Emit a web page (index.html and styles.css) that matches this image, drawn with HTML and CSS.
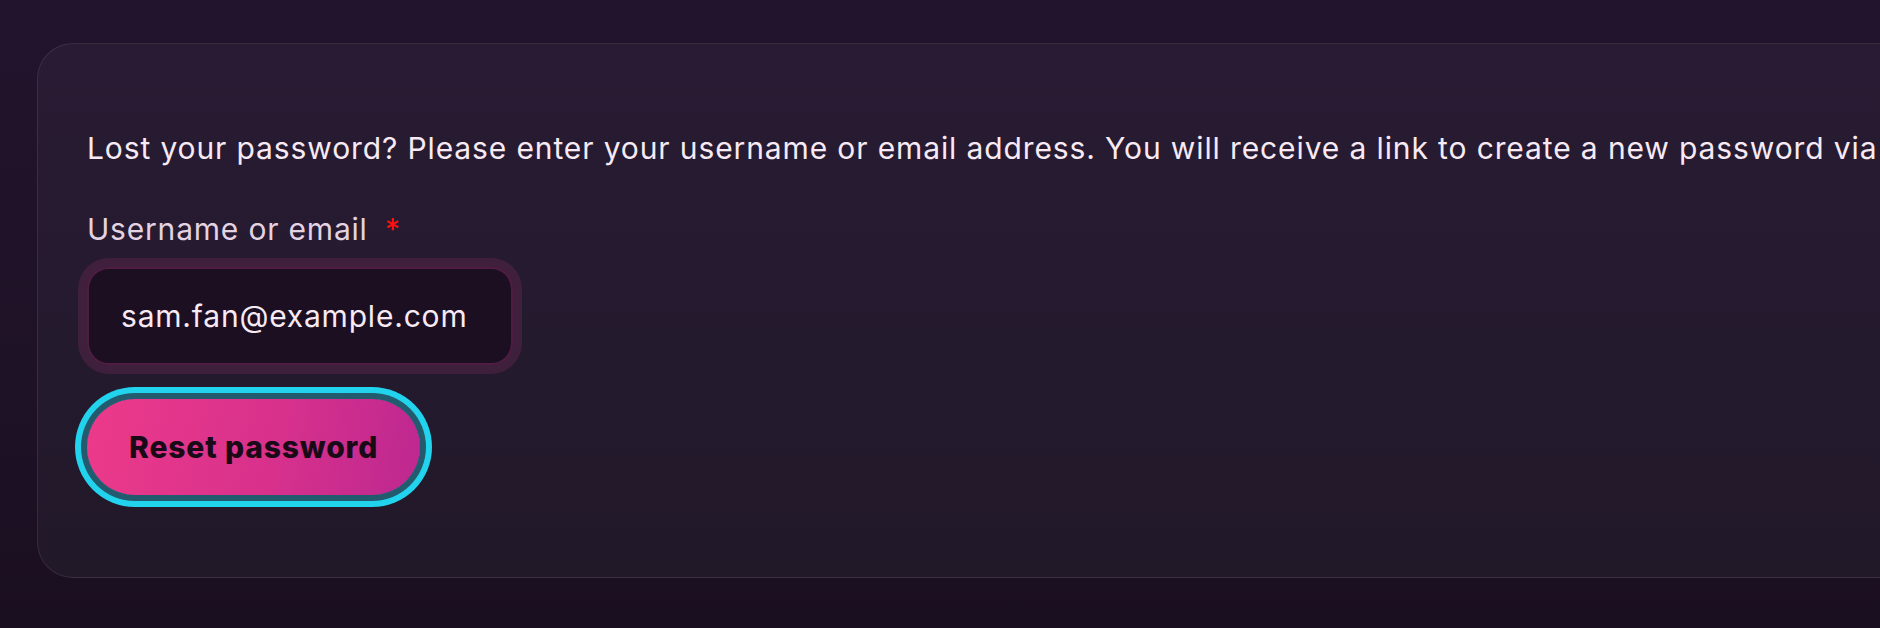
FILE: index.html
```html
<!DOCTYPE html>
<html lang="en">
<head>
<meta charset="utf-8">
<title>Lost password</title>
<link rel="stylesheet" href="styles.css">
</head>
<body>
<main class="page">
  <section class="card">
    <form class="reset-form">
      <p class="intro">Lost your password? Please enter your username or email address. You will receive a link to create a new password via email.</p>
      <label class="field-label" for="user_login">Username or email <span class="required">*</span></label>
      <input class="text-input" id="user_login" type="text" value="sam.fan@example.com">
      <button class="btn-primary" type="button">Reset password</button>
    </form>
  </section>
</main>
</body>
</html>
```

FILE: styles.css
```css
html {
  overflow: hidden;
}

body {
  margin: 0;
  min-height: 628px;
  background: linear-gradient(to bottom, #21142c 0%, #1e1227 60%, #1a0f20 100%);
  font-family: Inter, "Noto Sans", "Liberation Sans", sans-serif;
  color: #f6e9f3;
}

.page {
  padding: 43px 0 0 37px;
}

.card {
  width: 2300px;
  box-sizing: border-box;
  border: 1px solid rgba(255, 255, 255, 0.09);
  border-radius: 36px;
  background: linear-gradient(to bottom, #281b33 0%, #241a2e 60%, #211828 100%);
  padding: 86px 49px 82px 49px;
}

.reset-form {
  display: flex;
  flex-direction: column;
  align-items: flex-start;
}

.intro {
  margin: 0;
  font-size: 30px;
  line-height: 36px;
  letter-spacing: 0.88px;
  white-space: nowrap;
  color: #f7eaf4;
}

.field-label {
  margin-top: 46px;
  font-size: 30px;
  line-height: 34px;
  letter-spacing: 0.8px;
  color: #e4d3e2;
}

.required {
  color: #ff1010;
  margin-left: 8px;
}

.text-input {
  margin-top: 21px;
  width: 426px;
  height: 98px;
  box-sizing: border-box;
  border: 2px solid #4f1d42;
  border-radius: 22px;
  background: #1c0f22;
  color: #f7eaf4;
  font-family: Inter, "Noto Sans", "Liberation Sans", sans-serif;
  font-size: 30px;
  letter-spacing: 0.8px;
  padding: 0 0 0 32px;
  box-shadow: 0 0 0 9px rgba(236, 72, 153, 0.13);
  outline: none;
}

.btn-primary {
  margin-top: 34px;
  height: 96px;
  padding: 0 42px;
  border: none;
  border-radius: 999px;
  background: linear-gradient(100deg, #ec3a8a 0%, #d8318c 55%, #bd2890 100%);
  color: #1a0a18;
  font-family: Inter, "Noto Sans", "Liberation Sans", sans-serif;
  font-size: 30px;
  font-weight: 800;
  letter-spacing: 0.85px;
  box-shadow: 0 0 0 6px #225b6d, 0 0 0 12px #22d3ee;
  cursor: pointer;
}
```
